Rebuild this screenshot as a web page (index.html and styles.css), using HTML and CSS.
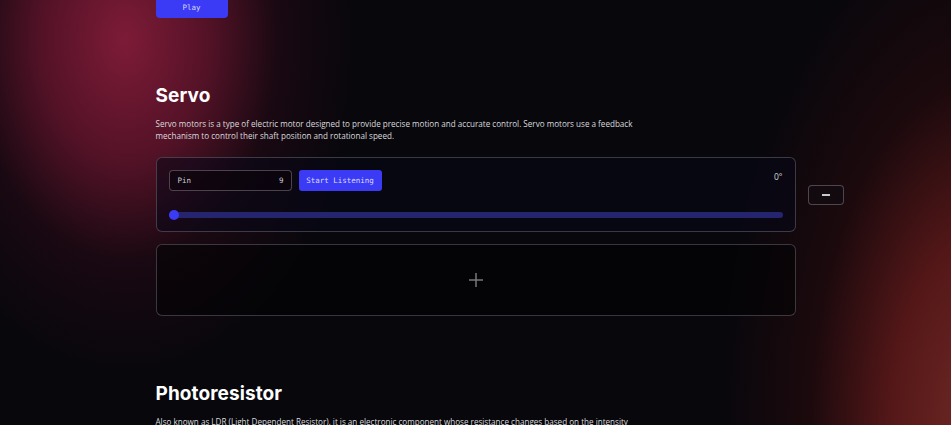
FILE: index.html
```html
<!DOCTYPE html>
<html lang="en">
<head>
<meta charset="utf-8">
<title>Components</title>
<link rel="stylesheet" href="styles.css">
</head>
<body>
<main class="page">
  <button class="play-btn">Play</button>

  <section class="section servo">
    <h2 class="section-title">Servo</h2>
    <p class="section-desc">Servo motors is a type of electric motor designed to provide precise motion and accurate control. Servo motors use a feedback mechanism to control their shaft position and rotational speed.</p>

    <div class="card-row">
      <div class="card servo-card">
        <div class="servo-top">
          <div class="controls">
            <label class="pin-field">
              <span class="pin-label">Pin</span>
              <span class="pin-value">9</span>
            </label>
            <button class="listen-btn">Start Listening</button>
          </div>
          <span class="angle">0°</span>
        </div>
        <div class="slider">
          <span class="slider-thumb"></span>
        </div>
      </div>
      <button class="remove-btn" aria-label="Remove"><span class="dash"></span></button>
    </div>

    <div class="card add-card">
      <svg class="plus" width="16" height="16" viewBox="0 0 16 16" aria-hidden="true">
        <path d="M8 1v14M1 8h14" stroke="#75757c" stroke-width="1.5" fill="none"/>
      </svg>
    </div>
  </section>

  <section class="section photo">
    <h2 class="section-title">Photoresistor</h2>
    <p class="section-desc">Also known as LDR (Light Dependent Resistor), it is an electronic component whose resistance changes based on the intensity of light falling on it.</p>
  </section>
</main>
</body>
</html>
```

FILE: styles.css
```css
html, body {
  margin: 0;
  padding: 0;
}

body {
  width: 951px;
  height: 425px;
  overflow: hidden;
  background-color: #07070c;
  background-image:
    radial-gradient(ellipse 235px 340px at 125px 40px, rgba(125, 27, 55, 1) 0%, rgba(110, 22, 48, 0.75) 35%, rgba(60, 12, 28, 0.35) 65%, rgba(7, 7, 12, 0) 100%),
    radial-gradient(ellipse 270px 540px at 985px 430px, rgba(112, 42, 38, 1) 0%, rgba(98, 26, 26, 0.85) 35%, rgba(52, 12, 14, 0.45) 65%, rgba(7, 7, 12, 0) 100%);
  color: #ffffff;
  font-family: "Open Sans", "Noto Sans", sans-serif;
}

.page {
  width: 640px;
  margin: 0 auto;
}

.play-btn {
  display: block;
  margin-top: -4px;
  width: 72px;
  height: 22px;
  border: none;
  border-radius: 4px;
  background: #3b3bf6;
  color: #d8d9ff;
  font-family: "DejaVu Sans Mono", "Liberation Mono", monospace;
  font-size: 7.5px;
  padding: 0;
}

.section-title {
  font-family: "Inter", "Noto Sans", sans-serif;
  font-weight: 700;
  font-size: 19px;
  line-height: 24px;
  margin: 0;
  color: #ffffff;
  letter-spacing: 0.1px;
}

.servo .section-title {
  margin-top: 66px;
}

.section-desc {
  margin: 10px 0 0;
  width: 477px;
  font-size: 8.1px;
  line-height: 12px;
  color: #dadade;
}

.card-row {
  display: flex;
  align-items: center;
  margin-top: 15px;
}

.card {
  box-sizing: border-box;
  border: 1px solid rgba(120, 120, 130, 0.45);
  border-radius: 6px;
}

.servo-card {
  flex: 0 0 640px;
  height: 75px;
  padding: 12px 12px 0;
  background: rgba(8, 8, 24, 0.55);
}

.servo-top {
  display: flex;
  justify-content: space-between;
  align-items: flex-start;
}

.controls {
  display: flex;
  gap: 7px;
}

.pin-field {
  box-sizing: border-box;
  width: 123px;
  height: 21px;
  display: flex;
  align-items: center;
  justify-content: space-between;
  padding: 0 7px 0 8px;
  border: 1px solid rgba(130, 120, 130, 0.55);
  border-radius: 4px;
  background: rgba(10, 4, 10, 0.6);
  font-family: "DejaVu Sans Mono", "Liberation Mono", monospace;
  font-size: 7.5px;
  color: #cfcfd6;
}

.listen-btn {
  width: 83px;
  height: 21px;
  border: none;
  border-radius: 3px;
  background: #3b3bf6;
  color: #dcdcff;
  font-family: "DejaVu Sans Mono", "Liberation Mono", monospace;
  font-size: 7.5px;
  padding: 0;
}

.angle {
  font-size: 8.5px;
  line-height: 12px;
  margin-top: 1px;
  color: #d4d4d8;
}

.slider {
  position: relative;
  margin-top: 21px;
  height: 6px;
  border-radius: 3px;
  background: #25246e;
}

.slider-thumb {
  position: absolute;
  left: 0;
  top: 50%;
  width: 10px;
  height: 10px;
  margin-top: -5px;
  border-radius: 50%;
  background: #3b3bf6;
}

.remove-btn {
  flex: 0 0 auto;
  margin-left: 12px;
  width: 36px;
  height: 20px;
  box-sizing: border-box;
  display: flex;
  align-items: center;
  justify-content: center;
  padding: 0;
  border: 1px solid rgba(130, 120, 130, 0.55);
  border-radius: 4px;
  background: #120a0e;
}

.dash {
  display: block;
  width: 8px;
  height: 2px;
  background: #c8c8cc;
}

.add-card {
  margin-top: 12px;
  height: 72px;
  display: flex;
  align-items: center;
  justify-content: center;
  background: rgba(2, 2, 4, 0.55);
}

.plus {
  display: block;
}

.photo .section-title {
  margin-top: 66px;
}
```
